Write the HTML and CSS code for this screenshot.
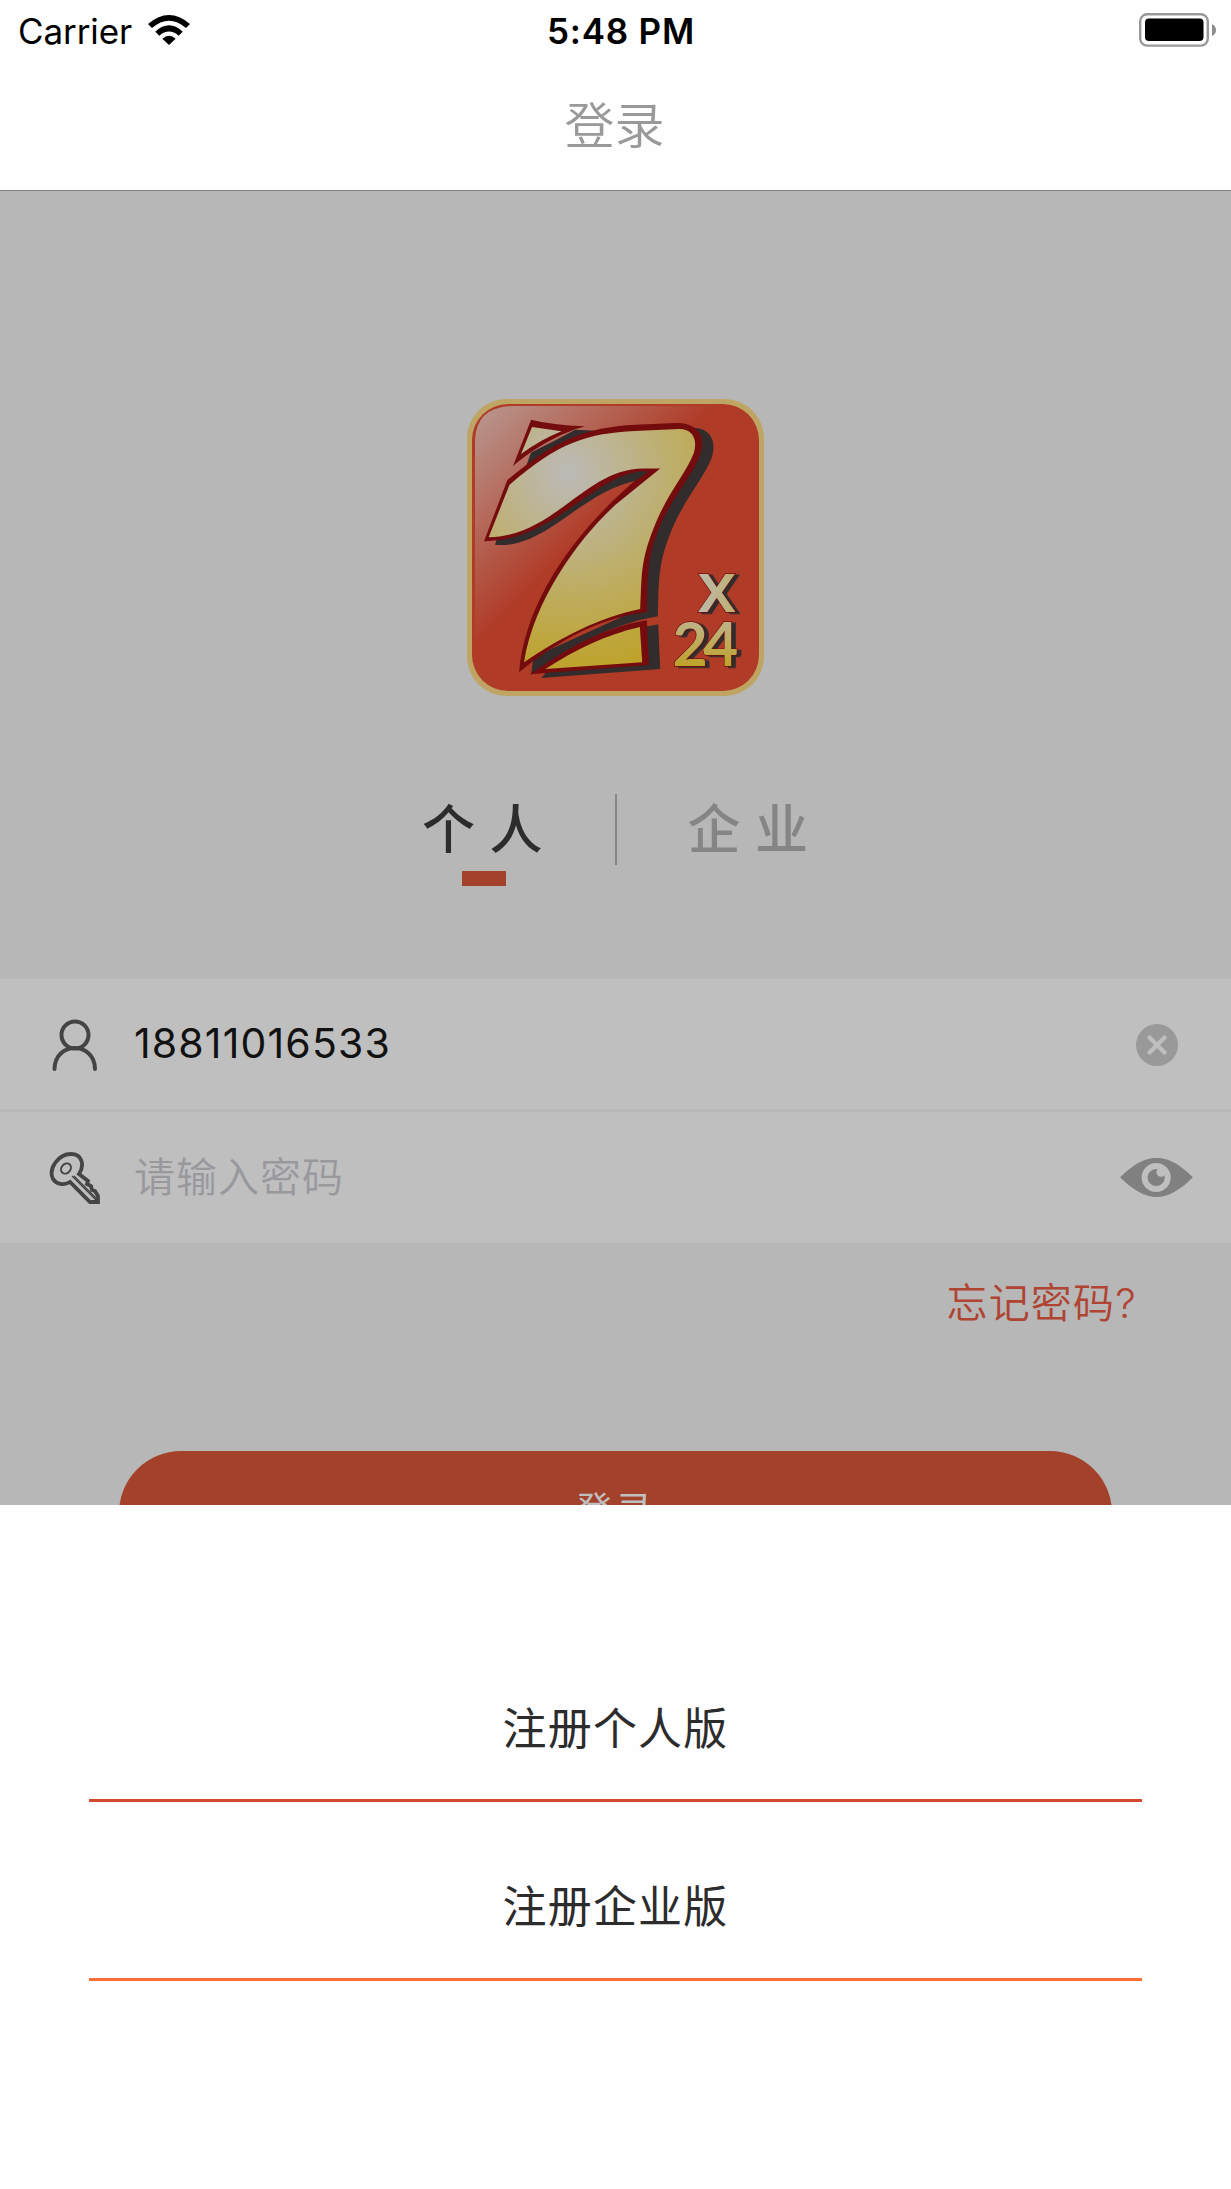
FILE: index.html
```html
<!DOCTYPE html>
<html lang="zh-CN">
<head>
<meta charset="utf-8">
<title>登录</title>
<link rel="stylesheet" href="styles.css">
</head>
<body>
<header class="top">
  <div class="status">
    <div class="carrier"><span>Carrier</span>
      <svg class="wifi" viewBox="0 0 126 90"><path d="M0 27Q63-27 126 27L114 39Q63-5 12 39ZM22 50Q63 12 104 50L92 62Q63 37 34 62ZM43 71Q63 54 83 71L63 90Z"/></svg>
    </div>
    <div class="clock">5:48 PM</div>
    <svg class="battery" viewBox="0 0 78 34"><rect x="1.2" y="1.2" width="67.6" height="31.4" rx="7" fill="none" stroke="#999" stroke-width="2.4"/><rect x="6" y="5.5" width="58.5" height="22.5" rx="4" fill="#000"/><path d="M73 11Q77 13 77 17T73 23Z" fill="#8c8c8c"/></svg>
  </div>
  <h1 class="title">登录</h1>
</header>
<main class="login">
  <svg class="logo" viewBox="36 27 890 890">
    <defs>
      <linearGradient id="sheen" gradientUnits="userSpaceOnUse" x1="70" y1="70" x2="410" y2="410"><stop offset="0" stop-color="#b9958d"/><stop offset="1" stop-color="#b03c28"/></linearGradient>
      <radialGradient id="gold" gradientUnits="userSpaceOnUse" cx="340" cy="250" r="650"><stop offset="0" stop-color="#bcbab8"/><stop offset=".2" stop-color="#bdb598"/><stop offset=".5" stop-color="#beae68"/><stop offset="1" stop-color="#bea01d"/></radialGradient>
      <linearGradient id="cross" x1="0" y1="0" x2="1" y2="0"><stop offset="0" stop-color="#bdbab0"/><stop offset="1" stop-color="#beaf6c"/></linearGradient>
      <linearGradient id="num" x1="0" y1="0" x2="0" y2="1"><stop offset=".2" stop-color="#beb48b"/><stop offset=".9" stop-color="#bea01d"/></linearGradient>
    </defs>
    <rect x="36" y="27" width="890" height="890" rx="118" fill="#bfa564"/>
    <rect x="51" y="42" width="860" height="860" rx="108" fill="#b03c28"/>
    <path d="M60 150Q64 52 170 48H800Q905 52 905 150V800Q890 896 800 896H160Q60 890 60 800Z" fill="url(#sheen)"/>
    <g fill="#322c2c">
      <path d="M360 119L425 122Q310 156 213 229L228 187Q297 154 360 119Z"/>
      <path d="M720 113C770 118 785 158 768 207C742 270 685 330 645 430C608 525 611 570 608 678Q420 710 228 854L235 800L555 655L560 420L710 160Z"/>
      <path d="M120 464L126 446C245 445 400 280 540 240L587 242L545 271C370 308 275 477 120 464Z"/>
      <path d="M575 709L609 702L615 836L258 863L280 840L575 820Z"/>
    </g>
    <g fill="#740c0e">
      <path d="M228 89Q290 105 390 109C310 130 230 180 174 228Z"/>
      <path d="M157 270C300 150 390 112 540 104L660 99C725 98 752 135 737 185C718 250 655 315 615 405C575 500 578 550 576 665C440 682 320 742 192 846C210 640 345 440 535 276L580 244C430 235 300 455 87 453Z"/>
      <path d="M225 852C340 770 450 710 575 690L581 824Z"/>
    </g>
    <g fill="url(#gold)">
      <path d="M231 111L319 124Q255 150 198 192Z"/>
      <path d="M163 285C310 155 400 130 540 123L670 117C714 116 727 150 716 188C690 255 635 310 595 415C555 515 560 560 555 656C430 682 315 742 207 816C235 630 375 440 480 345L615 235H565C390 235 300 438 101 441Z"/>
      <path d="M271 836C365 775 450 735 554 710L561 816Z"/>
    </g>
    <text class="logo-cross" x="726" y="664" fill="url(#cross)">x</text>
    <text class="logo-number" x="652" y="827" fill="url(#num)">24</text>
  </svg>
  <nav class="tabs">
    <a class="tab active">个人</a>
    <a class="tab">企业</a>
  </nav>
  <div class="fields">
    <div class="field">
      <svg class="icon person" viewBox="0 0 52 54" fill="none" stroke="#444" stroke-width="4" stroke-linecap="round"><circle cx="26" cy="17" r="13.5"/><path d="M5.500 51C6 23 45.500 23 46 51"/></svg>
      <span class="value">18811016533</span>
      <svg class="clear" viewBox="0 0 42 42"><circle cx="21" cy="21" r="21" fill="#999"/><path d="M13.500 13.500L28.500 28.500M28.500 13.500L13.500 28.500" stroke="#bfbfbf" stroke-width="4.200" stroke-linecap="round"/></svg>
    </div>
    <div class="field">
      <svg class="icon" viewBox="0 0 52 54" fill="none" stroke="#444" stroke-width="3.800"><path d="M21 31C15 35 7 33 4 28C-1 18 9 3 22 3C33 3 36 14 30 23L39 30L38 33L42 35L43 39L46 40L49 45V51H41Z"/><ellipse cx="17" cy="17.500" rx="4.500" ry="5.500" transform="rotate(40 17 17.500)" stroke-width="2"/><path d="M23 25L47 49M25 25L48 48" stroke-width="1.200"/></svg>
      <span class="placeholder">请输入密码</span>
      <svg class="eye" viewBox="0 0 220 118"><path d="M0 58C80-20 140-20 220 58C140 138 80 138 0 58Z" fill="#808080"/><circle cx="109" cy="59" r="35" fill="#808080" stroke="#bfbfbf" stroke-width="18"/><circle cx="124" cy="43" r="14" fill="#bfbfbf"/></svg>
    </div>
  </div>
  <a class="forgot">忘记密码<span>?</span></a>
  <div class="submit">登录</div>
</main>
<section class="sheet">
  <div class="option">注册个人版</div>
  <div class="option light">注册企业版</div>
</section>
</body>
</html>
```
FILE: styles.css
```css
* { box-sizing: border-box; }
body {
  margin: 0;
  width: 1231px;
  height: 2189px;
  display: flex;
  flex-direction: column;
  overflow: hidden;
  background: #fefefe;
  color: #2c2c2c;
  font-family: Inter, "Noto Sans CJK SC", sans-serif;
}
svg { display: block; flex: none; }
.top { height: 191px; border-bottom: 1px solid #808080; }
.status {
  display: grid;
  grid-template-columns: 1fr auto 1fr;
  align-items: center;
  height: 62px;
  padding: 0 14px 0 18px;
  color: #000;
  font-size: 35px;
}
.carrier { display: flex; align-items: center; gap: 16px; letter-spacing: -.1px; }
.wifi { width: 42px; height: 30px; margin-top: -3px; }
.clock { font-weight: 600; letter-spacing: .8px; padding-left: 7px; }
.battery { width: 78px; height: 34px; justify-self: end; margin-top: -2px; }
.title {
  margin: 28px 0 0 -2px;
  text-align: center;
  color: #999;
  font-size: 50px;
  line-height: 72px;
  font-weight: 350;
}
.login {
  height: 1314px;
  overflow: hidden;
  background: #b7b7b7;
  display: flex;
  flex-direction: column;
  align-items: center;
}
.logo { width: 297px; height: 297px; margin-top: 208px; }
.logo-cross, .logo-number { stroke: #740c0e; stroke-width: 4px; paint-order: stroke; filter: drop-shadow(12px 4px 0 #322c2c); }
.logo-cross { font: 600 212px "Open Sans", sans-serif; }
.logo-number { font: 700 182px Lato, sans-serif; letter-spacing: -14px; }
.tabs { display: flex; margin-top: 98px; height: 95px; }
.tab {
  width: 265px;
  height: 71px;
  display: flex;
  flex-direction: column;
  align-items: center;
  color: #858585;
  font-size: 53px;
  line-height: 73px;
  font-weight: 500;
  letter-spacing: 14.5px;
  text-indent: 12px;
}
.tab.active { width: 267px; color: #2c2c2c; border-right: 2px solid #858585; text-indent: 15px; }
.tab.active::after {
  content: "";
  flex: none;
  width: 44px;
  height: 15px;
  margin: 4px 0 0 3px;
  background: #a3412b;
}
.fields { width: 100%; margin-top: 114px; }
.field {
  height: 131px;
  display: flex;
  align-items: center;
  background: #bfbfbf;
  font-size: 41px;
}
.field:first-child { height: 133px; border-bottom: 3px solid #b7b7b7; }
.icon { width: 52px; height: 54px; margin: 0 34px 0 49px; }
.person { margin-top: 2px; }
.value, .placeholder { flex: 1; }
.value { color: #111; letter-spacing: 1.15px; margin: -3px 0 0 -1px; }
.placeholder { color: #98989d; font-weight: 350; letter-spacing: 1px; margin: -8px 0 0 -1px; }
.clear { width: 42px; height: 42px; margin: 2px 53px 0 0; }
.eye { width: 73px; height: 39px; margin-right: 38px; }
.forgot {
  align-self: flex-end;
  margin: 30px 94px 0 0;
  color: #b04432;
  font-size: 41px;
  line-height: 60px;
  letter-spacing: 1.2px;
  font-weight: 350;
}
.submit {
  flex: none;
  width: 993px;
  height: 124px;
  margin-top: 118px;
  border-radius: 62px;
  background: #a3412b;
  color: #bfbfbf;
  text-align: center;
  font-size: 37px;
  line-height: 119px;
  letter-spacing: 3px;
}
.sheet { padding: 119px 89px 0; }
.option {
  height: 178px;
  border-bottom: 3px solid #d54a2f;
  text-align: center;
  font-size: 44px;
  line-height: 210px;
  letter-spacing: 1.2px;
}
.option.light { height: 179px; border-color: #ff6d37; }
```
